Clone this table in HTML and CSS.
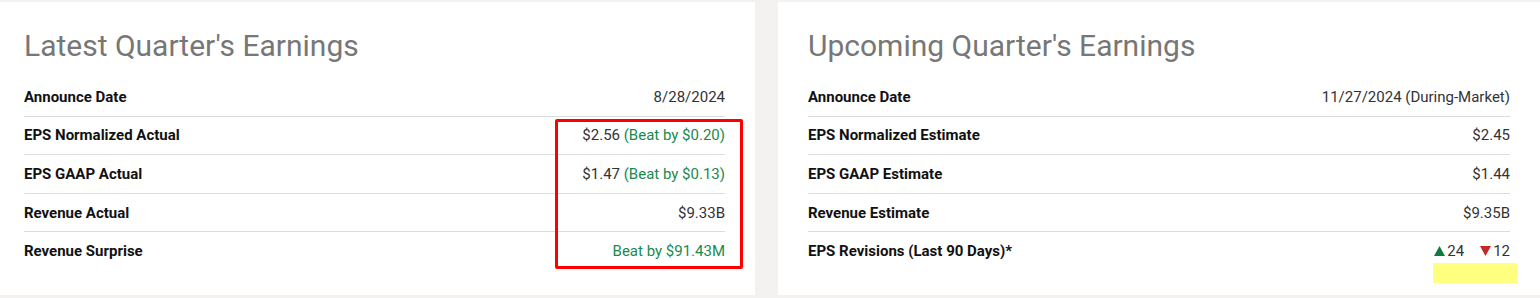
FILE: index.html
```html
<!DOCTYPE html>
<html lang="en">
<head>
<meta charset="utf-8">
<title>Earnings</title>
<link rel="stylesheet" href="styles.css">
</head>
<body>
<div class="page">
  <section class="card card-left">
    <h2 class="title">Latest Quarter's Earnings</h2>
    <div class="rows">
      <div class="row"><span class="label">Announce Date</span><span class="value">8/28/2024</span></div>
      <div class="row"><span class="label">EPS Normalized Actual</span><span class="value">$2.56 <span class="beat">(Beat by $0.20)</span></span></div>
      <div class="row"><span class="label">EPS GAAP Actual</span><span class="value">$1.47 <span class="beat">(Beat by $0.13)</span></span></div>
      <div class="row"><span class="label">Revenue Actual</span><span class="value">$9.33B</span></div>
      <div class="row"><span class="label">Revenue Surprise</span><span class="value beat">Beat by $91.43M</span></div>
    </div>
    <div class="red-box"></div>
  </section>
  <section class="card card-right">
    <h2 class="title">Upcoming Quarter's Earnings</h2>
    <div class="rows">
      <div class="row"><span class="label">Announce Date</span><span class="value">11/27/2024 (During-Market)</span></div>
      <div class="row"><span class="label">EPS Normalized Estimate</span><span class="value">$2.45</span></div>
      <div class="row"><span class="label">EPS GAAP Estimate</span><span class="value">$1.44</span></div>
      <div class="row"><span class="label">Revenue Estimate</span><span class="value">$9.35B</span></div>
      <div class="row"><span class="label">EPS Revisions (Last 90 Days)*</span>
        <span class="value revisions">
          <span class="rev"><svg class="tri" width="11" height="10" viewBox="0 0 11 10"><path d="M5.5 0 L11 10 L0 10 Z" fill="#137a3f"/></svg>24</span>
          <span class="rev"><svg class="tri" width="11" height="10" viewBox="0 0 11 10"><path d="M0 0 L11 0 L5.5 10 Z" fill="#c62828"/></svg>12</span>
        </span>
      </div>
    </div>
    <div class="yellow-mark"></div>
  </section>
</div>
</body>
</html>
```
FILE: styles.css
```css
html, body {
  margin: 0;
  padding: 0;
}
body {
  background: #f4f1f1;
  font-family: Roboto, "Liberation Sans", Arial, sans-serif;
  width: 1540px;
  height: 298px;
  overflow: hidden;
}
.page {
  display: flex;
  gap: 23px;
  padding-top: 2px;
  height: 293px;
}
.card {
  position: relative;
  background: #ffffff;
  box-sizing: border-box;
  padding: 26px 30px 0 30px;
}
.card-left {
  width: 755px;
  padding-left: 24px;
}
.card-right {
  width: 762px;
}
.title {
  margin: 0 0 14px 0;
  font-size: 30px;
  line-height: 36px;
  font-weight: 400;
  color: #777777;
}
.rows {
  display: flex;
  flex-direction: column;
}
.row {
  display: flex;
  justify-content: space-between;
  align-items: center;
  height: 37.6px;
  border-bottom: 1px solid #dcdcdc;
  font-size: 15px;
}
.row:last-child {
  border-bottom: none;
}
.label {
  font-weight: 700;
  color: #111111;
}
.value {
  color: #333333;
}
.beat {
  color: #1a8a4c;
}
.revisions {
  display: flex;
  gap: 16px;
}
.rev {
  display: inline-flex;
  align-items: center;
  gap: 2px;
}
.tri {
  display: block;
}
.red-box {
  position: absolute;
  left: 555px;
  top: 117px;
  width: 188px;
  height: 150px;
  box-sizing: border-box;
  border: 3px solid #ff0000;
  border-radius: 2px;
}
.yellow-mark {
  position: absolute;
  left: 655px;
  top: 261px;
  width: 84px;
  height: 20px;
  background: #ffff80;
}
```
